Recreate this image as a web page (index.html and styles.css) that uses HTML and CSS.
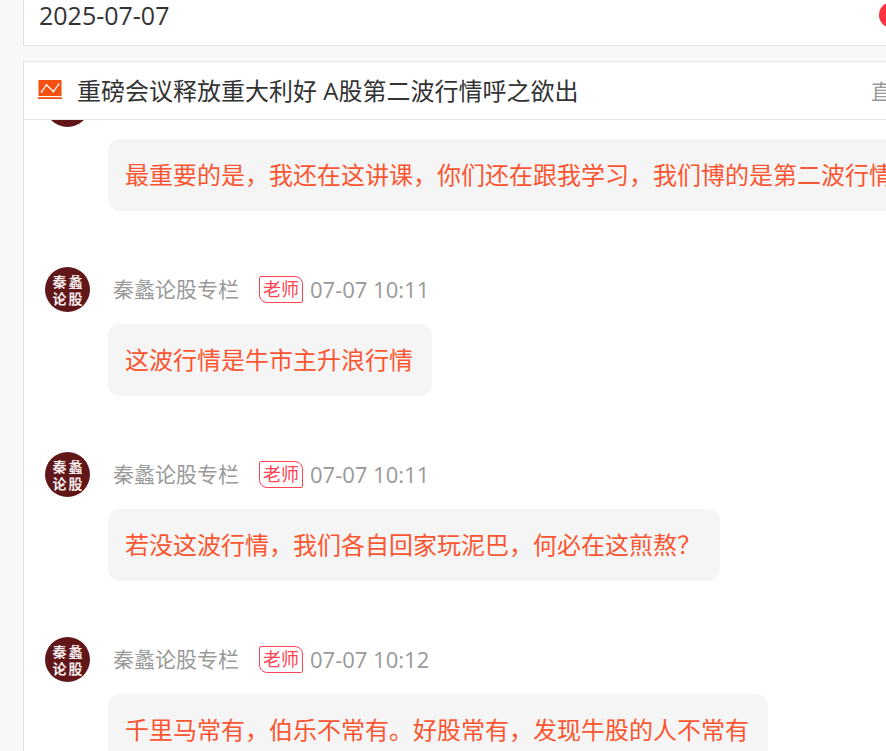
FILE: index.html
```html
<!DOCTYPE html>
<html lang="zh-CN">

<head>
    <meta charset="UTF-8">
    <meta name="viewport" content="width=device-width, initial-scale=1.0">
    <title>直播</title>
    <link rel="stylesheet" href="styles.css">
</head>

<body>

    <main class="page">
        <section class="panel date-panel">
            <time datetime="2025-07-07">2025-07-07</time>
            <span class="dot"></span>
        </section>

        <section class="panel live-panel">
            <header class="live-header">
                <svg class="live-icon" width="24" height="20" viewBox="0 0 24 20">
                    <rect x="0.5" y="0" width="23" height="16" fill="#f5500f" />
                    <rect x="0" y="17.2" width="24" height="1.8" fill="#f5500f" />
                    <path d="M3.5 11.8 L8.5 5 L15.5 11.5 L20.5 4.5" fill="none" stroke="#fff" stroke-width="1.2" />
                    <g fill="#fff">
                        <circle cx="3.5" cy="11.8" r="1" />
                        <circle cx="8.5" cy="5" r="1" />
                        <circle cx="15.5" cy="11.5" r="1" />
                        <circle cx="20.5" cy="4.5" r="1" />
                    </g>
                </svg>
                <h1>重磅会议释放重大利好 A股第二波行情呼之欲出</h1>
                <span class="live-status">直</span>
            </header>

            <div class="messages">
                <article class="message">
                    <div class="avatar"></div>
                    <div class="message-body">
                        <div class="meta"></div>
                        <p class="bubble">最重要的是，我还在这讲课，你们还在跟我学习，我们博的是第二波行情</p>
                    </div>
                </article>

                <article class="message">
                    <div class="avatar"><span>秦</span><span>蠡</span><span>论</span><span>股</span></div>
                    <div class="message-body">
                        <div class="meta">
                            <span class="name">秦蠡论股专栏</span>
                            <span class="tag">老师</span>
                            <time>07-07 10:11</time>
                        </div>
                        <p class="bubble">这波行情是牛市主升浪行情</p>
                    </div>
                </article>

                <article class="message">
                    <div class="avatar"><span>秦</span><span>蠡</span><span>论</span><span>股</span></div>
                    <div class="message-body">
                        <div class="meta">
                            <span class="name">秦蠡论股专栏</span>
                            <span class="tag">老师</span>
                            <time>07-07 10:11</time>
                        </div>
                        <p class="bubble">若没这波行情，我们各自回家玩泥巴，何必在这煎熬？</p>
                    </div>
                </article>

                <article class="message">
                    <div class="avatar"><span>秦</span><span>蠡</span><span>论</span><span>股</span></div>
                    <div class="message-body">
                        <div class="meta">
                            <span class="name">秦蠡论股专栏</span>
                            <span class="tag">老师</span>
                            <time>07-07 10:12</time>
                        </div>
                        <p class="bubble">千里马常有，伯乐不常有。好股常有，发现牛股的人不常有</p>
                    </div>
                </article>
            </div>
        </section>
    </main>

</body>

</html>
```

FILE: styles.css
```css
* {
    box-sizing: border-box;
}

body {
    margin: 0;
    height: 100vh;
    overflow: hidden;
    background-color: #f8f8f8;
    color: #333;
    font-family: "Open Sans", "Noto Sans CJK SC", sans-serif;
    font-size: 24px;
}

.page {
    display: flex;
    flex-direction: column;
    gap: 15px;
    height: 100vh;
    margin-left: 23px;
    margin-right: -21px;
}

.panel {
    background-color: #fff;
    border: 1px solid #e3e3e3;
}

.date-panel {
    display: flex;
    flex: none;
    align-items: center;
    justify-content: space-between;
    border-top: none;
    padding: 0 1px 15px 15px;
    font-size: 25px;
    line-height: 30px;
}

.dot {
    width: 26px;
    height: 26px;
    border-radius: 13px;
    background-color: #ff3340;
}

.live-panel {
    flex: 1;
    min-height: 0;
    overflow: hidden;
    border-bottom: none;
}

.live-header {
    position: relative;
    z-index: 1;
    display: flex;
    align-items: center;
    height: 58px;
    padding: 0 14px;
    background-color: #fff;
    border-bottom: 1px solid #e3e3e3;
}

.live-icon {
    margin-right: 15px;
    margin-bottom: 2px;
}

.live-header h1 {
    margin: 0;
    font-size: 24px;
    font-weight: normal;
    line-height: 36px;
    white-space: nowrap;
}

.live-status {
    margin-left: auto;
    color: #999;
    font-size: 21px;
    line-height: 36px;
}

/* list is scrolled under the header */
.messages {
    margin-top: -38px;
    padding-left: 21px;
}

.message {
    display: flex;
    gap: 18px;
    margin-bottom: 56px;
}

.avatar {
    display: grid;
    grid-template-columns: 16px 16px;
    grid-auto-rows: 17px;
    align-content: center;
    justify-content: center;
    flex: none;
    width: 45px;
    height: 45px;
    border-radius: 50%;
    background-color: #611719;
    color: #f6eded;
    font-size: 14px;
    font-weight: bold;
    line-height: 17px;
    text-align: center;
}

.meta {
    display: flex;
    align-items: center;
    height: 44px;
    padding-left: 5px;
    margin-bottom: 13px;
    color: #999;
    font-size: 22px;
    line-height: 30px;
}

.name {
    margin-right: 20px;
    font-size: 21px;
}

.tag {
    margin-right: 7px;
    padding: 0 3px;
    border: 1px solid #fe4352;
    border-radius: 2px 8px;
    color: #fe4352;
    font-size: 18px;
    line-height: 25px;
}

.bubble {
    width: max-content;
    margin: 0;
    padding: 18px 19px 18px 17px;
    border-radius: 12px;
    background-color: #f5f5f5;
    color: #fc5531;
    line-height: 36px;
    white-space: nowrap;
}
```
